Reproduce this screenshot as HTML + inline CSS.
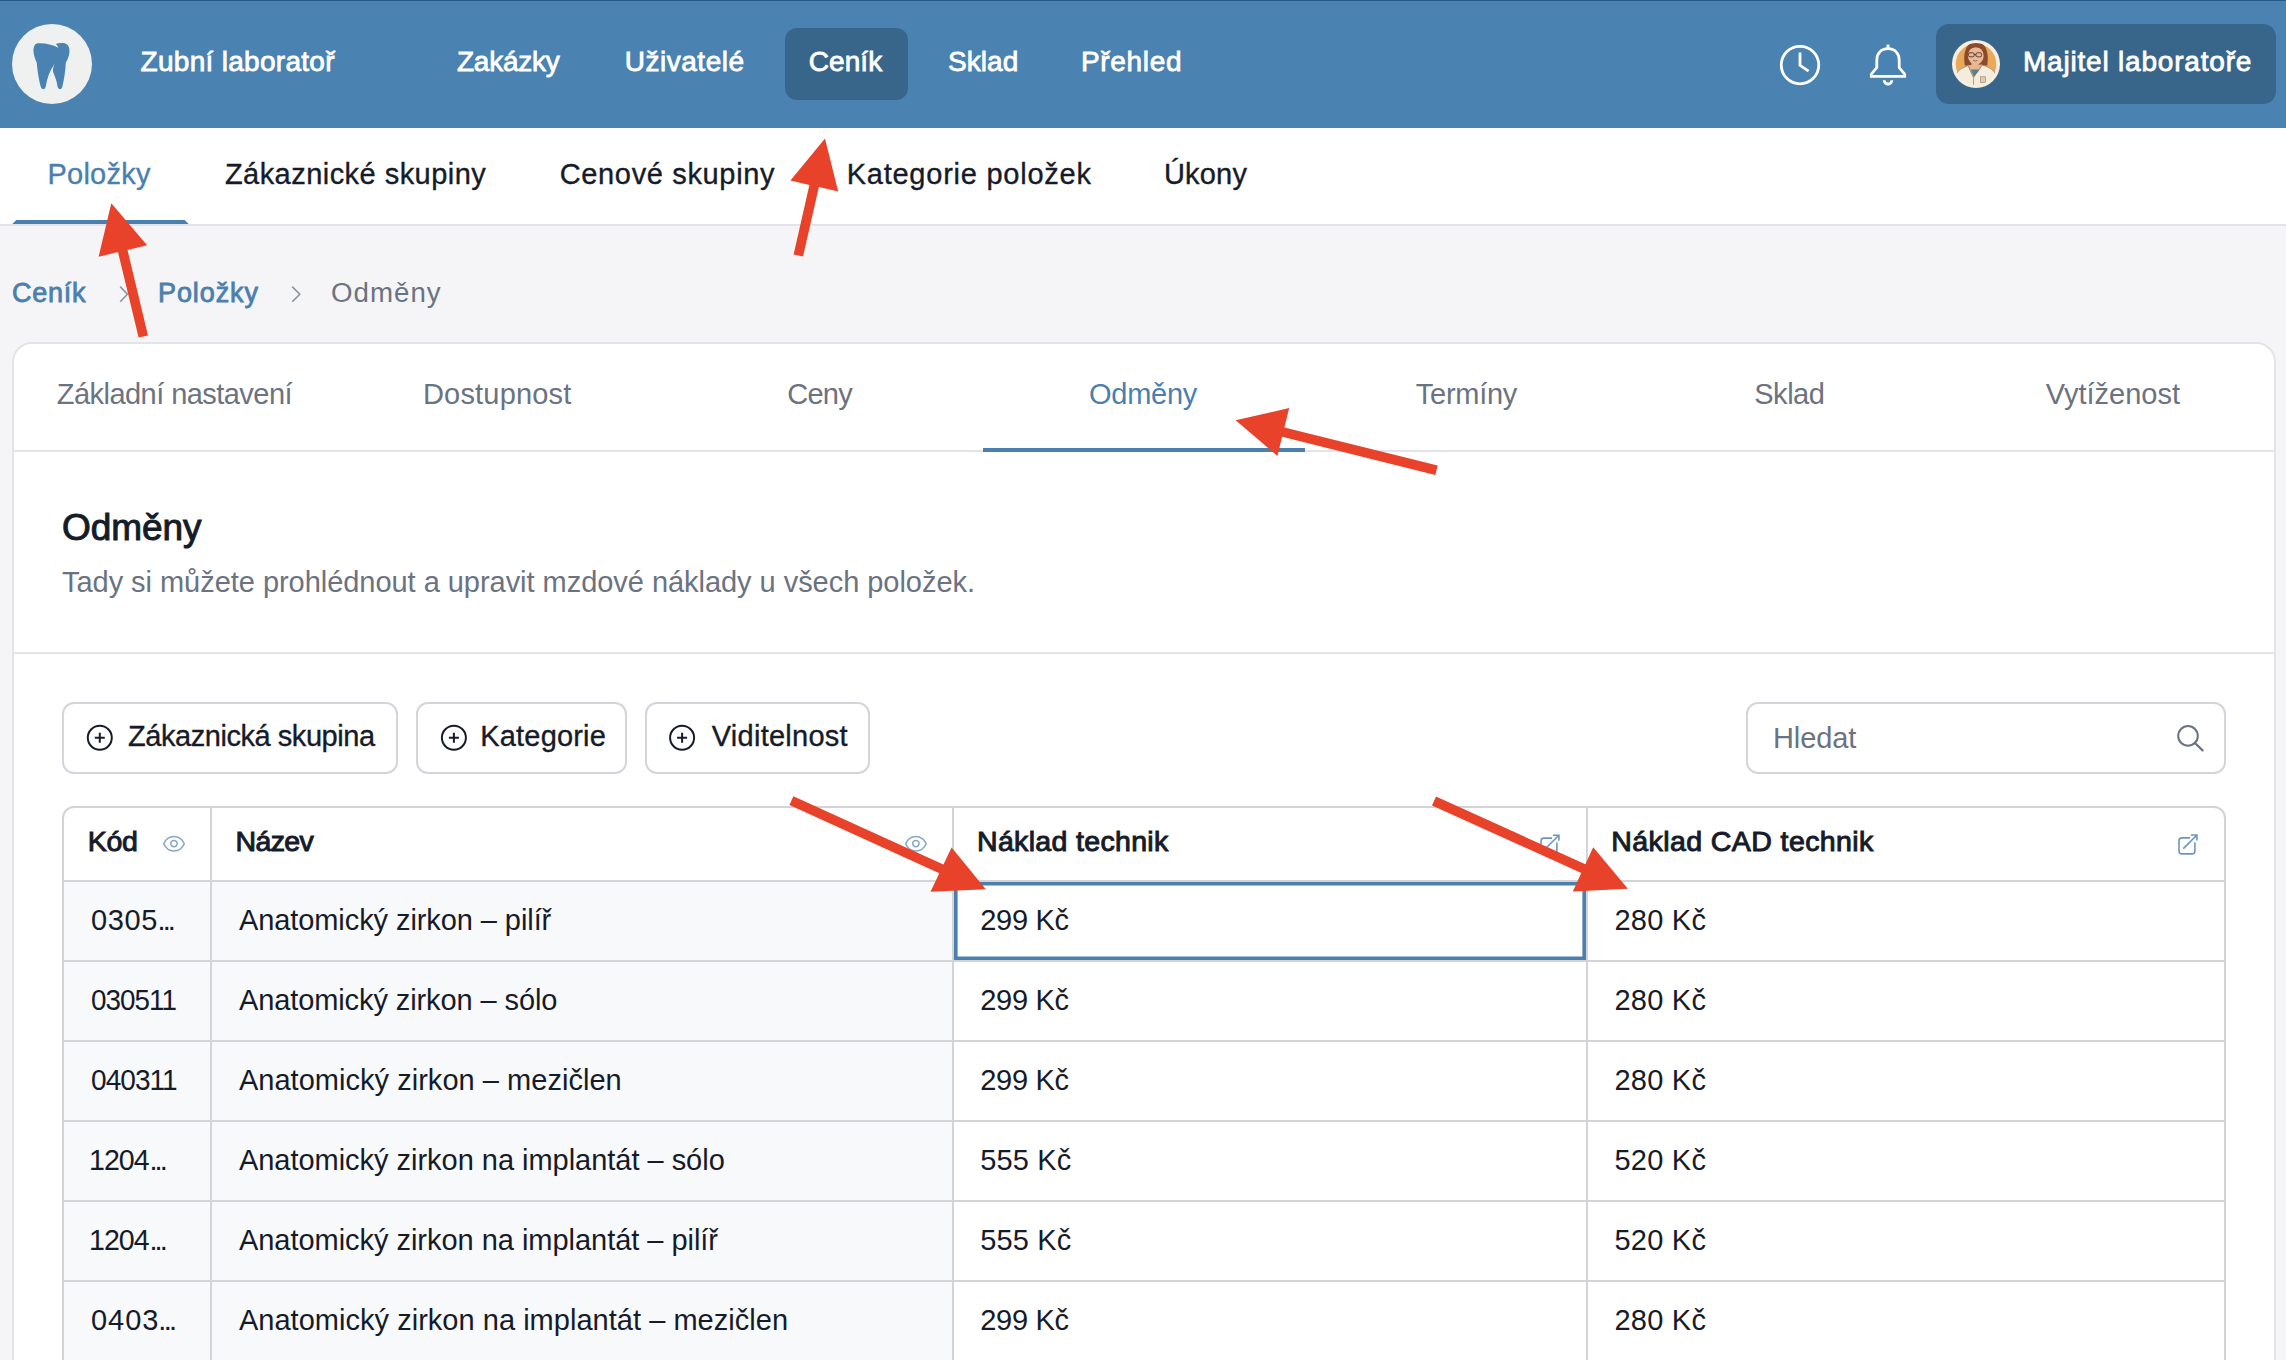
<!DOCTYPE html>
<html lang="cs"><head><meta charset="utf-8"><title>Ceník – Odměny</title>
<style>
html,body{margin:0;padding:0;width:2286px;height:1360px;overflow:hidden;background:#f5f5f7;font-family:"Liberation Sans",sans-serif}
.a{position:absolute}
.t{position:absolute;white-space:pre;font-family:"Liberation Sans",sans-serif;z-index:5}
.btn{border:2px solid #d3d5da;border-radius:12px;background:#ffffff}
</style></head><body>

<div class="a" style="left:0;top:0;width:2286px;height:128px;background:#4a82b1"></div>
<div class="a" style="left:0;top:0;width:2286px;height:1px;background:#24598a"></div>
<div class="a" style="left:12px;top:24px;width:80px;height:80px;border-radius:50%;background:#eef1ef"></div>
<div class="a" style="left:785px;top:28px;width:123px;height:72px;border-radius:12px;background:#38668b"></div>
<div class="a" style="left:1936px;top:24px;width:340px;height:80px;border-radius:13px;background:#38668b"></div>
<div class="a" style="left:0;top:128px;width:2286px;height:96px;background:#ffffff"></div>
<div class="a" style="left:0;top:224px;width:2286px;height:2px;background:#e3e4e8"></div>
<div class="a" style="left:12.3px;top:220px;width:176.3px;height:4px;background:#4a7fae;clip-path:polygon(0 100%,4px 0,calc(100% - 4px) 0,100% 100%)"></div>
<div class="a" style="left:12px;top:342px;width:2260px;height:1100px;border:2px solid #e3e4e8;border-radius:20px;background:#ffffff"></div>
<div class="a" style="left:14px;top:450px;width:2260px;height:2px;background:#e3e4e8"></div>
<div class="a" style="left:983px;top:448px;width:322px;height:4px;background:#4a7fae"></div>
<div class="a" style="left:14px;top:652px;width:2260px;height:2px;background:#e3e4e8"></div>
<div class="a btn" style="left:62px;top:702px;width:332px;height:68px"></div>
<div class="a btn" style="left:416px;top:702px;width:207px;height:68px"></div>
<div class="a btn" style="left:645px;top:702px;width:221px;height:68px"></div>
<div class="a btn" style="left:1746px;top:702px;width:476px;height:68px"></div>
<div class="a" style="left:62px;top:806px;width:2160px;height:700px;border:2px solid #d2d4d8;border-radius:12px;background:#ffffff;overflow:hidden">
  <div class="a" style="left:0;top:74px;width:888px;height:700px;background:#f8f9fb"></div>
</div>
<div class="a" style="left:210px;top:808px;width:2px;height:600px;background:#d2d4d8"></div>
<div class="a" style="left:952px;top:808px;width:2px;height:600px;background:#d2d4d8"></div>
<div class="a" style="left:1586px;top:808px;width:2px;height:600px;background:#d2d4d8"></div>
<div class="a" style="left:64px;top:880px;width:2160px;height:2px;background:#d2d4d8"></div>
<div class="a" style="left:64px;top:960px;width:2160px;height:2px;background:#d2d4d8"></div>
<div class="a" style="left:64px;top:1040px;width:2160px;height:2px;background:#d2d4d8"></div>
<div class="a" style="left:64px;top:1120px;width:2160px;height:2px;background:#d2d4d8"></div>
<div class="a" style="left:64px;top:1200px;width:2160px;height:2px;background:#d2d4d8"></div>
<div class="a" style="left:64px;top:1280px;width:2160px;height:2px;background:#d2d4d8"></div>
<div class="a" style="left:954px;top:882px;width:632px;height:77.5px;box-shadow:inset 0 0 0 3.6px #4a7fae"></div>

<div class="t" style="left:140.60px;top:48.10px;font-size:28.0px;line-height:28.0px;font-weight:400;-webkit-text-stroke:0.8px currentColor;color:#ffffff;letter-spacing:0.286px">Zubní laboratoř</div>
<div class="t" style="left:456.90px;top:48.10px;font-size:28.0px;line-height:28.0px;font-weight:400;-webkit-text-stroke:0.8px currentColor;color:#ffffff;letter-spacing:-0.217px">Zakázky</div>
<div class="t" style="left:624.70px;top:48.10px;font-size:28.0px;line-height:28.0px;font-weight:400;-webkit-text-stroke:0.8px currentColor;color:#ffffff;letter-spacing:0.525px">Uživatelé</div>
<div class="t" style="left:808.70px;top:48.10px;font-size:28.0px;line-height:28.0px;font-weight:400;-webkit-text-stroke:0.8px currentColor;color:#ffffff;letter-spacing:0.100px">Ceník</div>
<div class="t" style="left:948.00px;top:48.10px;font-size:28.0px;line-height:28.0px;font-weight:400;-webkit-text-stroke:0.8px currentColor;color:#ffffff;letter-spacing:0.050px">Sklad</div>
<div class="t" style="left:1081.00px;top:48.10px;font-size:28.0px;line-height:28.0px;font-weight:400;-webkit-text-stroke:0.8px currentColor;color:#ffffff;letter-spacing:0.667px">Přehled</div>
<div class="t" style="left:2022.90px;top:48.10px;font-size:28.0px;line-height:28.0px;font-weight:400;-webkit-text-stroke:0.8px currentColor;color:#ffffff;letter-spacing:0.806px">Majitel laboratoře</div>
<div class="t" style="left:47.40px;top:160.20px;font-size:29.0px;line-height:29.0px;font-weight:400;-webkit-text-stroke:0.35px currentColor;color:#4a7fae;letter-spacing:0.267px">Položky</div>
<div class="t" style="left:224.90px;top:160.00px;font-size:29.0px;line-height:29.0px;font-weight:400;-webkit-text-stroke:0.35px currentColor;color:#161b29;letter-spacing:0.459px">Zákaznické skupiny</div>
<div class="t" style="left:559.70px;top:160.00px;font-size:29.0px;line-height:29.0px;font-weight:400;-webkit-text-stroke:0.35px currentColor;color:#161b29;letter-spacing:0.654px">Cenové skupiny</div>
<div class="t" style="left:846.70px;top:160.00px;font-size:29.0px;line-height:29.0px;font-weight:400;-webkit-text-stroke:0.35px currentColor;color:#161b29;letter-spacing:0.756px">Kategorie položek</div>
<div class="t" style="left:1163.90px;top:160.00px;font-size:29.0px;line-height:29.0px;font-weight:400;-webkit-text-stroke:0.35px currentColor;color:#161b29;letter-spacing:0.200px">Úkony</div>
<div class="t" style="left:12.00px;top:279.50px;font-size:27.0px;line-height:27.0px;font-weight:400;-webkit-text-stroke:0.8px currentColor;color:#4a7fae;letter-spacing:0.750px">Ceník</div>
<div class="t" style="left:158.00px;top:279.50px;font-size:27.0px;line-height:27.0px;font-weight:400;-webkit-text-stroke:0.8px currentColor;color:#4a7fae;letter-spacing:0.917px">Položky</div>
<div class="t" style="left:331.00px;top:280.30px;font-size:27.0px;line-height:27.0px;font-weight:400;color:#6b7280;letter-spacing:1.000px;transform:scaleX(1.0245);transform-origin:1px 0">Odměny</div>
<div class="t" style="left:56.80px;top:379.70px;font-size:29.0px;line-height:29.0px;font-weight:400;color:#6b7280;letter-spacing:-0.547px">Základní nastavení</div>
<div class="t" style="left:423.00px;top:379.70px;font-size:29.0px;line-height:29.0px;font-weight:400;color:#6b7280;letter-spacing:0.178px">Dostupnost</div>
<div class="t" style="left:787.20px;top:379.70px;font-size:29.0px;line-height:29.0px;font-weight:400;color:#6b7280;letter-spacing:-0.733px">Ceny</div>
<div class="t" style="left:1089.00px;top:379.70px;font-size:29.0px;line-height:29.0px;font-weight:400;color:#4a7fae;letter-spacing:-0.260px">Odměny</div>
<div class="t" style="left:1415.80px;top:379.70px;font-size:29.0px;line-height:29.0px;font-weight:400;color:#6b7280;letter-spacing:-0.267px">Termíny</div>
<div class="t" style="left:1754.20px;top:379.70px;font-size:29.0px;line-height:29.0px;font-weight:400;color:#6b7280;letter-spacing:-0.450px">Sklad</div>
<div class="t" style="left:2045.70px;top:379.70px;font-size:29.0px;line-height:29.0px;font-weight:400;color:#6b7280;letter-spacing:-0.000px">Vytíženost</div>
<div class="t" style="left:62.10px;top:509.20px;font-size:37.0px;line-height:37.0px;font-weight:400;-webkit-text-stroke:1.0px currentColor;color:#161b29;letter-spacing:-0.080px">Odměny</div>
<div class="t" style="left:62.00px;top:568.30px;font-size:29.0px;line-height:29.0px;font-weight:400;color:#6b7280;letter-spacing:-0.039px">Tady si můžete prohlédnout a upravit mzdové náklady u všech položek.</div>
<div class="t" style="left:128.00px;top:722.20px;font-size:29.0px;line-height:29.0px;font-weight:400;-webkit-text-stroke:0.35px currentColor;color:#161b29;letter-spacing:-0.447px">Zákaznická skupina</div>
<div class="t" style="left:480.30px;top:722.20px;font-size:29.0px;line-height:29.0px;font-weight:400;-webkit-text-stroke:0.35px currentColor;color:#161b29;letter-spacing:0.175px">Kategorie</div>
<div class="t" style="left:711.80px;top:722.20px;font-size:29.0px;line-height:29.0px;font-weight:400;-webkit-text-stroke:0.35px currentColor;color:#161b29;letter-spacing:0.250px">Viditelnost</div>
<div class="t" style="left:1773.00px;top:724.40px;font-size:29.0px;line-height:29.0px;font-weight:400;color:#6b7280;letter-spacing:-0.100px">Hledat</div>
<div class="t" style="left:87.75px;top:827.40px;font-size:28.5px;line-height:28.5px;font-weight:400;-webkit-text-stroke:1.0px currentColor;color:#161b29;letter-spacing:-0.250px">Kód</div>
<div class="t" style="left:235.50px;top:827.40px;font-size:28.5px;line-height:28.5px;font-weight:400;-webkit-text-stroke:1.0px currentColor;color:#161b29;letter-spacing:-0.625px">Název</div>
<div class="t" style="left:977.00px;top:827.40px;font-size:28.5px;line-height:28.5px;font-weight:400;-webkit-text-stroke:1.0px currentColor;color:#161b29;letter-spacing:0.331px">Náklad technik</div>
<div class="t" style="left:1611.30px;top:827.40px;font-size:28.5px;line-height:28.5px;font-weight:400;-webkit-text-stroke:1.0px currentColor;color:#161b29;letter-spacing:0.412px">Náklad CAD technik</div>
<div class="t" style="left:90.90px;top:906.00px;font-size:29.0px;line-height:29.0px;font-weight:400;color:#161b29;letter-spacing:0.667px">0305</div>
<div class="t" style="left:157.60px;top:906.00px;font-size:29.0px;line-height:29.0px;font-weight:400;color:#161b29;letter-spacing:-2.925px">...</div>
<div class="t" style="left:238.90px;top:906.00px;font-size:29.0px;line-height:29.0px;font-weight:400;color:#161b29;letter-spacing:-0.079px">Anatomický zirkon – pilíř</div>
<div class="t" style="left:980.25px;top:905.50px;font-size:29.0px;line-height:29.0px;font-weight:400;color:#161b29;letter-spacing:-0.300px">299 Kč</div>
<div class="t" style="left:1614.40px;top:905.50px;font-size:29.0px;line-height:29.0px;font-weight:400;color:#161b29;letter-spacing:0.240px">280 Kč</div>
<div class="t" style="left:90.50px;top:986.00px;font-size:29.0px;line-height:29.0px;font-weight:400;color:#161b29;letter-spacing:-1.000px;transform:scaleX(0.9586);transform-origin:1px 0">030511</div>
<div class="t" style="left:238.90px;top:986.00px;font-size:29.0px;line-height:29.0px;font-weight:400;color:#161b29;letter-spacing:-0.096px">Anatomický zirkon – sólo</div>
<div class="t" style="left:980.25px;top:985.50px;font-size:29.0px;line-height:29.0px;font-weight:400;color:#161b29;letter-spacing:-0.300px">299 Kč</div>
<div class="t" style="left:1614.40px;top:985.50px;font-size:29.0px;line-height:29.0px;font-weight:400;color:#161b29;letter-spacing:0.240px">280 Kč</div>
<div class="t" style="left:90.50px;top:1066.00px;font-size:29.0px;line-height:29.0px;font-weight:400;color:#161b29;letter-spacing:-1.000px;transform:scaleX(0.9667);transform-origin:1px 0">040311</div>
<div class="t" style="left:238.90px;top:1066.00px;font-size:29.0px;line-height:29.0px;font-weight:400;color:#161b29;letter-spacing:0.030px">Anatomický zirkon – mezičlen</div>
<div class="t" style="left:980.25px;top:1065.50px;font-size:29.0px;line-height:29.0px;font-weight:400;color:#161b29;letter-spacing:-0.300px">299 Kč</div>
<div class="t" style="left:1614.40px;top:1065.50px;font-size:29.0px;line-height:29.0px;font-weight:400;color:#161b29;letter-spacing:0.240px">280 Kč</div>
<div class="t" style="left:89.25px;top:1146.00px;font-size:29.0px;line-height:29.0px;font-weight:400;color:#161b29;letter-spacing:-1.000px;transform:scaleX(0.9856);transform-origin:2px 0">1204</div>
<div class="t" style="left:149.50px;top:1146.00px;font-size:29.0px;line-height:29.0px;font-weight:400;color:#161b29;letter-spacing:-2.950px">...</div>
<div class="t" style="left:238.90px;top:1146.00px;font-size:29.0px;line-height:29.0px;font-weight:400;color:#161b29;letter-spacing:-0.025px">Anatomický zirkon na implantát – sólo</div>
<div class="t" style="left:980.25px;top:1145.50px;font-size:29.0px;line-height:29.0px;font-weight:400;color:#161b29;letter-spacing:0.150px">555 Kč</div>
<div class="t" style="left:1614.40px;top:1145.50px;font-size:29.0px;line-height:29.0px;font-weight:400;color:#161b29;letter-spacing:0.240px">520 Kč</div>
<div class="t" style="left:89.25px;top:1226.00px;font-size:29.0px;line-height:29.0px;font-weight:400;color:#161b29;letter-spacing:-1.000px;transform:scaleX(0.9856);transform-origin:2px 0">1204</div>
<div class="t" style="left:149.50px;top:1226.00px;font-size:29.0px;line-height:29.0px;font-weight:400;color:#161b29;letter-spacing:-2.950px">...</div>
<div class="t" style="left:238.90px;top:1226.00px;font-size:29.0px;line-height:29.0px;font-weight:400;color:#161b29;letter-spacing:-0.032px">Anatomický zirkon na implantát – pilíř</div>
<div class="t" style="left:980.25px;top:1225.50px;font-size:29.0px;line-height:29.0px;font-weight:400;color:#161b29;letter-spacing:0.150px">555 Kč</div>
<div class="t" style="left:1614.40px;top:1225.50px;font-size:29.0px;line-height:29.0px;font-weight:400;color:#161b29;letter-spacing:0.240px">520 Kč</div>
<div class="t" style="left:90.90px;top:1306.00px;font-size:29.0px;line-height:29.0px;font-weight:400;color:#161b29;letter-spacing:1.000px">0403</div>
<div class="t" style="left:158.25px;top:1306.00px;font-size:29.0px;line-height:29.0px;font-weight:400;color:#161b29;letter-spacing:-2.625px">...</div>
<div class="t" style="left:238.90px;top:1306.00px;font-size:29.0px;line-height:29.0px;font-weight:400;color:#161b29;letter-spacing:0.028px">Anatomický zirkon na implantát – mezičlen</div>
<div class="t" style="left:980.25px;top:1305.50px;font-size:29.0px;line-height:29.0px;font-weight:400;color:#161b29;letter-spacing:-0.300px">299 Kč</div>
<div class="t" style="left:1614.40px;top:1305.50px;font-size:29.0px;line-height:29.0px;font-weight:400;color:#161b29;letter-spacing:0.240px">280 Kč</div>
<svg class="a" style="left:0;top:0;z-index:10" width="2286" height="1360" viewBox="0 0 2286 1360">
<path transform="translate(22,34)" d="M16 9.3 C12.6 9.6 11.4 13.2 11.5 17.3 C11.7 21.8 13.3 25.3 14.7 28.4 C15.4 37 17.2 47 18.7 52.4 C19.4 55.8 23.2 55.8 23.7 52.4 C25 44.5 27.8 36.5 32.7 29.8 C31.3 33 30.6 35.8 31.1 38 C33.2 43.2 34.9 47.5 35.5 52.4 C36.1 55.8 39.9 55.8 40.4 52.4 C42.2 45 43.4 37 43.8 28.6 C45.8 25 47.6 21 47.5 16.4 C47.3 11.2 44.3 9 40.4 9.1 C38 9.2 35.6 9.5 33.7 10.1 C35 11.2 35.9 12.5 36.3 13.7 C30.5 10.8 23.5 9 16 9.3 Z" fill="#4a82b1"/>
<circle cx="1800" cy="65.1" r="18.75" fill="none" stroke="#fff" stroke-width="2.8"/>
<polyline points="1800,52.5 1800,65.3 1808.6,71.2" fill="none" stroke="#fff" stroke-width="2.8" stroke-linejoin="miter"/>
<g transform="translate(1860,40)" fill="none" stroke="#fff" stroke-width="2.8" stroke-linejoin="miter"><path d="M28 8.6 C21 8.6 16.8 13.5 16.8 20 L16.8 27.6 L11.3 34.2 L11.3 36.3 L44.7 36.3 L44.7 34.2 L39.2 27.6 L39.2 20 C39.2 13.5 35 8.6 28 8.6 Z"/><path d="M28 4.6 L28 8.5"/><path d="M24.2 40.2 A3.8 3.8 0 0 0 31.8 40.2"/></g>
<defs><clipPath id="avc"><circle cx="0" cy="0" r="21"/></clipPath></defs>
<g transform="translate(1976,64)"><circle r="24" fill="#f6eee0"/><circle r="20.3" fill="#e9a85a"/><g clip-path="url(#avc)"><path d="M-11.2 1.5 C-12.8 -8 -11.8 -21.9 0 -21.9 C11.8 -21.9 12.8 -8 11.2 1.5 Z" fill="#8b4a2b"/><rect x="-4.6" y="-3" width="7.2" height="10" fill="#e6b592"/><ellipse cx="-0.2" cy="-8.2" rx="7.9" ry="8.9" fill="#e9b996"/><path d="M-8.9 -12.5 C-8.5 -20.5 8.5 -21 8.7 -11.5 C6.5 -15.5 2.5 -17.2 -1 -16.8 C-4.5 -16.3 -7.2 -14.6 -8.9 -12.5 Z" fill="#8b4a2b"/><path d="M-20 26 L-19.5 9.5 C-17.5 5.2 -12.5 3.4 -7.6 1.6 L-2.4 13.2 L6.2 1.0 C11.8 2.8 17 5 19.2 9.5 L20 26 Z" fill="#f4ecdc" stroke="#8f806c" stroke-width="0.7"/><path d="M-7.8 1.2 L-2.4 13.2 L6.4 0.6 Z" fill="#e6b592"/><path d="M-5.2 5.6 L3.6 5.6 L-2.2 12.6 Z" fill="#4e8192"/><path d="M-7.6 1.8 L-4.6 9.5 L-2.4 13.2 L2.5 6.5 L6 1.2" fill="none" stroke="#8f806c" stroke-width="0.7"/><path d="M-2.4 13.2 L-2.6 26" fill="none" stroke="#8f806c" stroke-width="0.7"/><rect x="4.6" y="12.8" width="5" height="5.6" fill="#e9c7a8" stroke="#8f806c" stroke-width="0.6"/><g fill="none" stroke="#4a3a31" stroke-width="0.9"><rect x="-7.4" y="-11.2" width="5.6" height="4" rx="1.4"/><rect x="0" y="-11.2" width="5.6" height="4" rx="1.4"/><path d="M-2.1 -9.4 L0.1 -9.4"/></g><path d="M-2.8 -3.6 Q-0.8 -2.4 1.4 -3.6" fill="none" stroke="#7a4a35" stroke-width="0.7"/></g></g>
<path d="M120.2 286.6 L127.4 294.2 L120.2 301.8" fill="none" stroke="#8e939c" stroke-width="1.6"/>
<path d="M292.2 286.6 L299.8 294.2 L292.2 301.8" fill="none" stroke="#8e939c" stroke-width="1.6"/>
<circle cx="99.8" cy="737.8" r="12" fill="none" stroke="#161b29" stroke-width="2"/>
<path d="M94.8 737.8 L104.8 737.8 M99.8 732.8 L99.8 742.8" stroke="#161b29" stroke-width="2"/>
<circle cx="453.9" cy="737.8" r="12" fill="none" stroke="#161b29" stroke-width="2"/>
<path d="M448.9 737.8 L458.9 737.8 M453.9 732.8 L453.9 742.8" stroke="#161b29" stroke-width="2"/>
<circle cx="682.1" cy="737.8" r="12" fill="none" stroke="#161b29" stroke-width="2"/>
<path d="M677.1 737.8 L687.1 737.8 M682.1 732.8 L682.1 742.8" stroke="#161b29" stroke-width="2"/>
<circle cx="2188" cy="735.9" r="9.8" fill="none" stroke="#6b7280" stroke-width="2"/>
<path d="M2195.2 743.2 L2202.6 750.4" stroke="#6b7280" stroke-width="2.2" stroke-linecap="round"/>
<g transform="translate(174,843.8)" fill="none" stroke="#86a6c6" stroke-width="1.5"><path d="M-10.3 0 C-8 -5.2 -4 -7.2 0 -7.2 C4 -7.2 8 -5.2 10.3 0 C8 5.2 4 7.2 0 7.2 C-4 7.2 -8 5.2 -10.3 0 Z"/><circle cx="0" cy="-0.2" r="3.2"/></g>
<g transform="translate(915.9,843.8)" fill="none" stroke="#86a6c6" stroke-width="1.5"><path d="M-10.3 0 C-8 -5.2 -4 -7.2 0 -7.2 C4 -7.2 8 -5.2 10.3 0 C8 5.2 4 7.2 0 7.2 C-4 7.2 -8 5.2 -10.3 0 Z"/><circle cx="0" cy="-0.2" r="3.2"/></g>
<g transform="translate(1540,834.2)" fill="none" stroke="#6e95c0" stroke-width="1.6"><path d="M12 3.9 L4 3.9 Q1 3.9 1 6.9 L1 16.9 Q1 19.9 4 19.9 L13.9 19.9 Q16.9 19.9 16.9 16.9 L16.9 8.2"/><path d="M5.3 14.6 L18.9 1 M13 1 L18.9 1 L18.9 6.6"/></g>
<g transform="translate(2178,834)" fill="none" stroke="#6e95c0" stroke-width="1.6"><path d="M12 3.9 L4 3.9 Q1 3.9 1 6.9 L1 16.9 Q1 19.9 4 19.9 L13.9 19.9 Q16.9 19.9 16.9 16.9 L16.9 8.2"/><path d="M5.3 14.6 L18.9 1 M13 1 L18.9 1 L18.9 6.6"/></g>
<polygon points="148.0,335.4 127.5,249.9 147.1,245.2 111.3,203.3 98.6,256.8 118.0,252.1 138.6,337.6" fill="#e8432a"/>
<polygon points="803.0,256.6 818.9,187.0 838.2,191.4 825.0,138.4 790.4,180.6 809.4,184.9 793.6,254.4" fill="#e8432a"/>
<polygon points="1437.7,465.5 1284.4,427.4 1289.2,408.1 1235.6,420.2 1277.4,455.9 1282.1,436.8 1435.3,474.9" fill="#e8432a"/>
<polygon points="789.4,805.0 939.3,873.3 930.5,891.7 985.8,889.2 951.6,847.4 943.4,864.6 793.4,796.2" fill="#e8432a"/>
<polygon points="1432.0,805.4 1581.3,873.0 1572.8,891.6 1627.9,888.8 1593.2,847.3 1585.4,864.2 1436.0,796.6" fill="#e8432a"/>
</svg>
</body></html>
